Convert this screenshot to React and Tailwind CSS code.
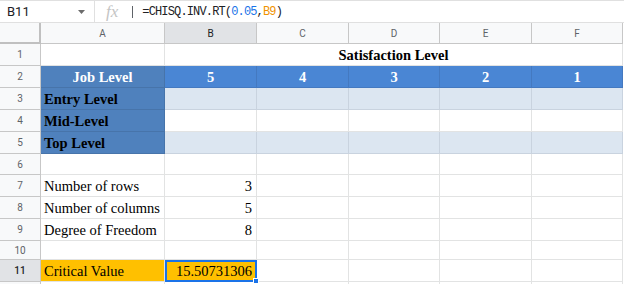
import React from "react";

const colW = ["w-[124px]", "w-[92px]", "w-[92px]", "w-[91px]", "w-[92px]", "w-[91px]"];
const letters = ["A", "B", "C", "D", "E", "F"];

const serif = "font-['Liberation_Serif','Times_New_Roman',serif] text-[14.5px] leading-[17px]";

function RowNum({ n, active }) {
  return (
    <div
      className={`w-[41px] shrink-0 flex items-center justify-center border-r border-b border-[#c7c7c7] text-[10px] font-['Roboto',Arial,sans-serif] ${
        active ? "bg-[#e1e3e6] text-[#202124] font-medium" : "bg-[#f8f9fa] text-[#5f6368]"
      }`}
    >
      {n}
    </div>
  );
}

function Cell({ w, className = "", children }) {
  return (
    <div className={`${w} shrink-0 flex items-end pb-[1px] border-r border-b overflow-hidden whitespace-nowrap ${serif} ${className}`}>
      {children}
    </div>
  );
}

function Row({ n, h, active, children }) {
  return (
    <div className={`flex ${h}`}>
      <RowNum n={n} active={active} />
      {children}
    </div>
  );
}

const plain = "border-[#e2e3e3] bg-white text-black";

function EmptyCells({ from = 0, cls = plain }) {
  return colW.slice(from).map((w, i) => <Cell key={i} w={w} className={cls} />);
}

export default function App() {
  return (
    <div className="w-[624px] h-[284px] overflow-hidden bg-white select-none">
      {/* formula bar */}
      <div className="h-[23px] flex items-center border-t border-b border-[#e0e0e0] font-['Roboto',Arial,sans-serif]">
        <div className="w-[95px] h-full flex items-center justify-between pl-[7px] pr-[9px] border-r border-[#e0e0e0]">
          <span className="text-[13px] text-[#202124]">B11</span>
          <svg width="7" height="4" viewBox="0 0 7 4">
            <path d="M0 0h7L3.5 4z" fill="#6b6b6b" />
          </svg>
        </div>
        <span className="ml-[11px] text-[17px] leading-none italic text-[#c4c4c4] font-['Liberation_Serif',serif]">fx</span>
        <div className="ml-[14px] w-px h-[12px] bg-[#5f6368]" />
        <span className="ml-[9px] text-[12px] tracking-[-0.85px] text-[#202124] font-['Liberation_Mono',monospace]">
          =CHISQ.INV.RT(<span className="text-[#1a73e8]">0.05</span>,<span className="text-[#f09300]">B9</span>)
        </span>
      </div>

      {/* column headers */}
      <div className="flex h-[21px]">
        <div className="w-[41px] shrink-0 bg-[#f8f9fa] border-r-2 border-b-2 border-[#c0c0c0]" />
        {letters.map((l, i) => (
          <div
            key={l}
            className={`${colW[i]} shrink-0 flex items-center justify-center border-r border-b border-[#c7c7c7] text-[10px] font-['Roboto',Arial,sans-serif] ${
              l === "B" ? "bg-[#e1e3e6] text-[#202124]" : "bg-[#f8f9fa] text-[#5f6368]"
            }`}
          >
            {l}
          </div>
        ))}
      </div>

      {/* row 1 */}
      <Row n={1} h="h-[22px]">
        <Cell w={colW[0]} className={plain} />
        <div className={`w-[458px] shrink-0 flex items-end justify-center pb-[1px] border-r border-b font-bold ${serif} ${plain}`}>
          Satisfaction Level
        </div>
      </Row>

      {/* row 2 */}
      <Row n={2} h="h-[22px]">
        <Cell w={colW[0]} className="justify-center font-bold text-white bg-[#4f81bd] border-[#4774aa]">
          Job Level
        </Cell>
        {["5", "4", "3", "2", "1"].map((v, i) => (
          <Cell key={v} w={colW[i + 1]} className="justify-center font-bold text-white bg-[#4a86d4] border-[#4479c0]">
            {v}
          </Cell>
        ))}
      </Row>

      {[
        [3, "Entry Level", true],
        [4, "Mid-Level", false],
        [5, "Top Level", true],
      ].map(([n, label, shaded]) => (
        <Row key={n} n={n} h="h-[22px]">
          <Cell w={colW[0]} className="pl-[3px] font-bold text-black bg-[#4f81bd] border-[#4774aa]">
            {label}
          </Cell>
          <EmptyCells from={1} cls={shaded ? "bg-[#dce6f1] border-[#c9d3df]" : plain} />
        </Row>
      ))}

      <Row n={6} h="h-[21px]">
        <EmptyCells />
      </Row>

      {[
        [7, "Number of rows", "3"],
        [8, "Number of columns", "5"],
        [9, "Degree of Freedom", "8"],
      ].map(([n, label, val]) => (
        <Row key={n} n={n} h="h-[22px]">
          <Cell w={colW[0]} className={`pl-[3px] ${plain}`}>
            {label}
          </Cell>
          <Cell w={colW[1]} className={`justify-end pr-[4px] ${plain}`}>
            {val}
          </Cell>
          <EmptyCells from={2} />
        </Row>
      ))}

      <Row n={10} h="h-[19px]">
        <EmptyCells />
      </Row>

      <Row n={11} h="h-[22px]" active>
        <Cell w={colW[0]} className="pl-[3px] bg-[#ffc000] border-[#e2e3e3] text-black">
          Critical Value
        </Cell>
        <div className={`${colW[1]} shrink-0 relative flex items-end justify-end pb-0 pr-[3px] border-2 border-[#1a73e8] bg-[#ffc000] text-black ${serif}`}>
          15.50731306
          <div className="absolute right-[-4px] bottom-[-4px] w-[6px] h-[6px] bg-[#1a73e8] border border-white" />
        </div>
        <EmptyCells from={2} />
      </Row>

      <Row n="" h="h-[22px]">
        <EmptyCells />
      </Row>
    </div>
  );
}
